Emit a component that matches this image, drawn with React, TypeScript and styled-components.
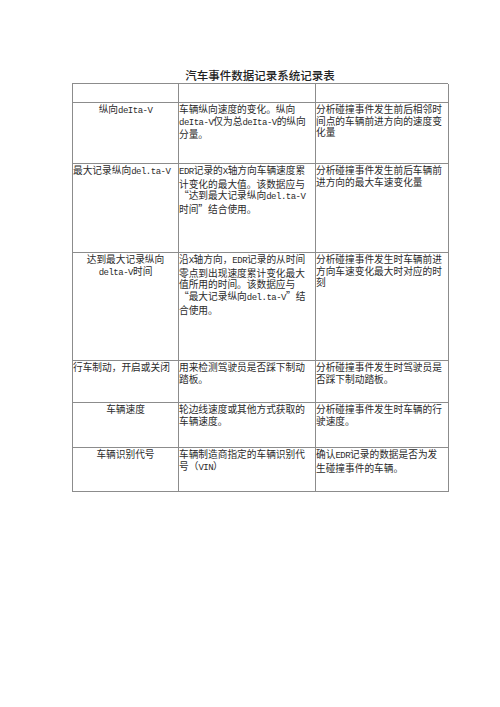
import React from "react";
import styled, { createGlobalStyle } from "styled-components";

const GlobalStyle = createGlobalStyle`
  html, body {
    margin: 0;
    padding: 0;
    background: #ffffff;
  }
`;

const Page = styled.div`
  padding: 68px 0 0 72px;
  width: 376px;
`;

const Title = styled.h1`
  margin: 0 0 1px;
  height: 14px;
  font-family: "Noto Sans CJK SC", sans-serif;
  font-size: 11.5px;
  font-weight: 500;
  line-height: 14px;
  text-align: center;
  color: #222;
`;

const Table = styled.div`
  display: grid;
  grid-template-columns: 106px 137px 133px;
  border-top: 1px solid #8c8c8c;
  border-left: 1px solid #8c8c8c;
`;

const Cell = styled.div<{ $center?: boolean; $h: number }>`
  box-sizing: border-box;
  height: ${(p) => p.$h}px;
  padding: 1px 0 0 0;
  border-right: 1px solid #8c8c8c;
  border-bottom: 1px solid #8c8c8c;
  font-family: "Noto Sans CJK SC", serif;
  font-size: 9.7px;
  line-height: 11.7px;
  color: #2b2b2b;
  text-align: ${(p) => (p.$center ? "center" : "left")};
  white-space: nowrap;
`;

const Line = styled.div`
  display: block;
`;

const Latin = styled.span`
  font-family: "Liberation Mono", monospace;
  font-size: 9px;
  letter-spacing: -0.5px;
`;

type Row = { h: number; cells: [string[], string[], string[]]; center?: boolean };

const rows: Row[] = [
  { h: 19, cells: [[], [], []] },
  {
    h: 61,
    center: true,
    cells: [
      ["纵向deIta-V"],
      ["车辆纵向速度的变化。纵向", "deIta-V仅为总deIta-V的纵向", "分量。"],
      ["分析碰撞事件发生前后相邻时", "间点的车辆前进方向的速度变", "化量"],
    ],
  },
  {
    h: 89,
    cells: [
      ["最大记录纵向del.ta-V"],
      ["EDR记录的X轴方向车辆速度累", "计变化的最大值。该数据应与", "“达到最大记录纵向del.ta-V", "时间”结合使用。"],
      ["分析碰撞事件发生前后车辆前", "进方向的最大车速变化量"],
    ],
  },
  {
    h: 108,
    center: true,
    cells: [
      ["达到最大记录纵向", "delta-V时间"],
      ["沿X轴方向，EDR记录的从时间", "零点到出现速度累计变化最大", "值所用的时间。该数据应与", "“最大记录纵向del.ta-V”结", "合使用。"],
      ["分析碰撞事件发生时车辆前进", "方向车速变化最大时对应的时", "刻"],
    ],
  },
  {
    h: 42,
    cells: [
      ["行车制动，开启或关闭"],
      ["用来检测驾驶员是否踩下制动", "踏板。"],
      ["分析碰撞事件发生时驾驶员是", "否踩下制动踏板。"],
    ],
  },
  {
    h: 45,
    center: true,
    cells: [
      ["车辆速度"],
      ["轮边线速度或其他方式获取的", "车辆速度。"],
      ["分析碰撞事件发生时车辆的行", "驶速度。"],
    ],
  },
  {
    h: 44,
    center: true,
    cells: [
      ["车辆识别代号"],
      ["车辆制造商指定的车辆识别代", "号（VIN）"],
      ["确认EDR记录的数据是否为发", "生碰撞事件的车辆。"],
    ],
  },
];

// half-width latin runs get the narrow mono font, the rest stays CJK
function renderText(text: string) {
  const parts = text.match(/[\x20-\x7e]+|[^\x20-\x7e]+/g) || [];
  return parts.map((part, i) =>
    /^[\x20-\x7e]+$/.test(part) ? <Latin key={i}>{part}</Latin> : <span key={i}>{part}</span>
  );
}

function App() {
  return (
    <>
      <GlobalStyle />
      <Page>
        <Title>汽车事件数据记录系统记录表</Title>
        <Table>
          {rows.map((row, r) =>
            row.cells.map((lines, c) => (
              <Cell key={`${r}-${c}`} $h={row.h} $center={c === 0 && row.center}>
                {lines.map((line, i) => (
                  <Line key={i}>{renderText(line)}</Line>
                ))}
              </Cell>
            ))
          )}
        </Table>
      </Page>
    </>
  );
}

export default App;
